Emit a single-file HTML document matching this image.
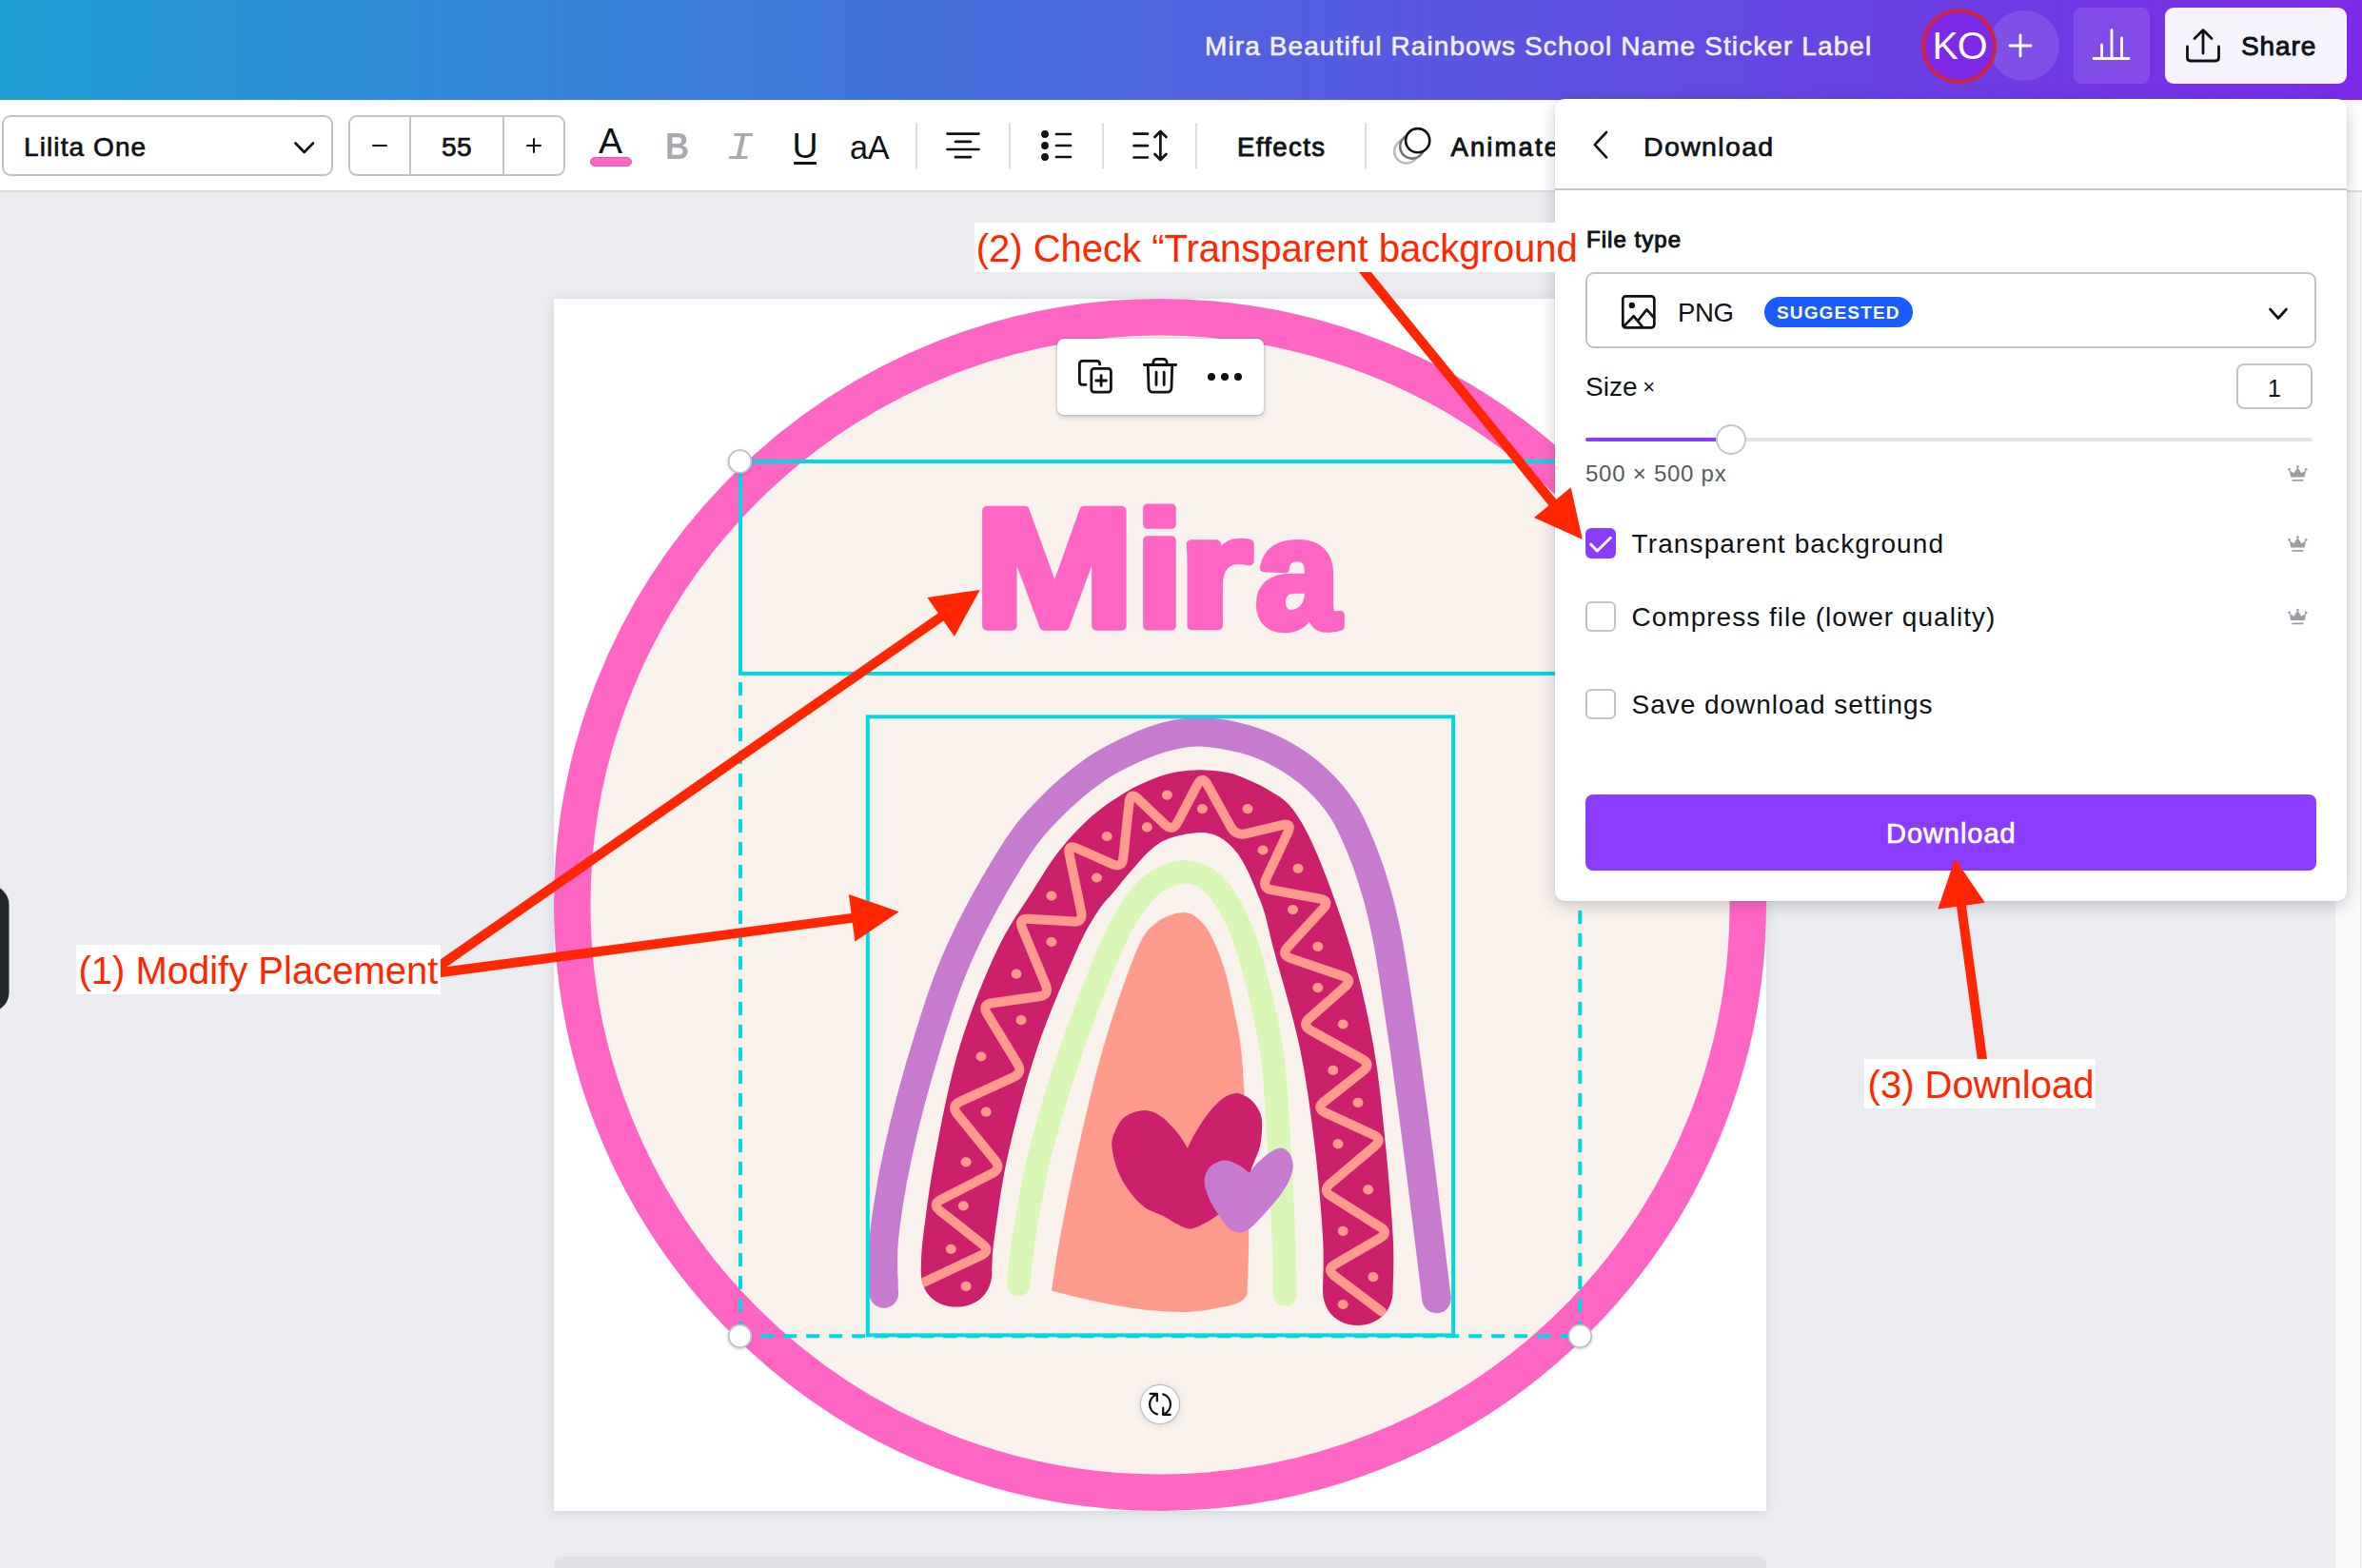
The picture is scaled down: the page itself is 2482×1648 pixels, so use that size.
<!DOCTYPE html>
<html lang="en">
<head>
<meta charset="utf-8">
<title>Mira Beautiful Rainbows School Name Sticker Label</title>
<style>
*{box-sizing:border-box;margin:0;padding:0}
html,body{width:2482px;height:1648px;overflow:hidden;background:#ebecf0;font-family:"Liberation Sans",sans-serif;color:#0d1216}
.abs{position:absolute}
#hdr{left:0;top:0;width:2482px;height:105px;background:linear-gradient(90deg,#1f9ed3 0%,#7d2ae8 100%)}
#tb{left:0;top:105px;width:2482px;height:95px;background:#fff}
#tbline{left:0;top:200px;width:2482px;height:2px;background:#dcdde1}
.box{border:2px solid #c0c4c9;border-radius:9px;background:#fff}
.t{position:absolute;white-space:nowrap;line-height:1}
#title{left:1266px;top:35px;font-size:27.5px;color:#fff;font-weight:400;letter-spacing:.45px}
.vdiv{position:absolute;width:2px;background:#dcdde1;top:129px;height:48px}
#scroll{left:2454px;top:202px;width:28px;height:1446px;background:#f9f9f9;border-right:1px solid #fdfdfd;box-shadow:inset -2px 0 0 -1px #ececec}
#canvas{left:582px;top:314px;width:1274px;height:1274px;background:#fff;box-shadow:0 2px 12px rgba(40,50,70,.12)}
#below{left:582px;top:1636px;width:1274px;height:20px;background:#e1e2e6;border-radius:7px 7px 0 0}
#lefttab{left:-31px;top:930.7px;width:40px;height:132.6px;background:#23272a;border-radius:20px;box-shadow:0 0 0 .6px #3c4043}
#panel{left:1634px;top:104px;width:832.3px;height:843.2px;background:#fff;border-radius:10px;box-shadow:0 0 0 1px rgba(60,70,90,.05),0 4px 18px rgba(40,50,70,.24)}
#pline{left:1634px;top:197.9px;width:832px;height:2px;background:#bfc4c9}
.lbl{background:#fff;color:#ff2600;font-size:40px;line-height:1;white-space:nowrap;position:absolute}
.cb{position:absolute;width:32px;height:32px;border:2px solid #c0c4c9;border-radius:6px;background:#fff}
</style>
</head>
<body>
<div class="abs" id="hdr"></div>
<div class="abs" id="tb"></div>
<div class="abs" id="tbline"></div>
<div class="abs" id="scroll"></div>
<div class="abs" id="lefttab"></div>
<div class="abs" id="canvas"></div>
<div class="abs" id="below"></div>
<svg class="abs" style="left:0;top:0" width="2482" height="1648" viewBox="0 0 2482 1648">
<defs><filter id="hs" x="-50%" y="-50%" width="200%" height="200%"><feDropShadow dx="0" dy="1" stdDeviation="1.6" flood-color="#39404f" flood-opacity=".28"/></filter><clipPath id="cv"><rect x="582" y="314" width="1274" height="1274"/></clipPath></defs>
<g clip-path="url(#cv)">
<circle cx="1219" cy="951" r="617.75" fill="#f9f1eb" stroke="#ff66c4" stroke-width="38.5"/>
<g><text transform="translate(1023.9,657.8) scale(1.185,1.040)" font-family="Liberation Sans, sans-serif" font-weight="700" font-size="170" fill="#ff66c4" stroke="#ff66c4" stroke-width="9" stroke-linejoin="round">M</text><text transform="translate(1193.3,658.0) scale(1.070,1.008)" font-family="Liberation Sans, sans-serif" font-weight="700" font-size="170" fill="#ff66c4" stroke="#ff66c4" stroke-width="9" stroke-linejoin="round">i</text><text transform="translate(1239.1,658.2) scale(1.156,0.956)" font-family="Liberation Sans, sans-serif" font-weight="700" font-size="170" fill="#ff66c4" stroke="#ff66c4" stroke-width="9" stroke-linejoin="round">r</text><text transform="translate(1319.5,658.6) scale(0.932,0.965)" font-family="Liberation Sans, sans-serif" font-weight="700" font-size="170" fill="#ff66c4" stroke="#ff66c4" stroke-width="9" stroke-linejoin="round">a</text></g>
<path d="M928.8,1359.5 C928.8,1357.9 928.5,1359.9 928.5,1350.0 C928.5,1340.1 926.4,1323.3 929.0,1300.0 C931.6,1276.7 936.6,1243.3 944.0,1210.0 C951.4,1176.7 962.4,1135.0 973.2,1100.0 C984.0,1065.0 993.8,1033.3 1008.8,1000.0 C1023.8,966.7 1047.4,925.0 1063.0,900.0 C1078.6,875.0 1087.8,865.3 1102.6,850.0 C1117.4,834.7 1135.8,819.2 1152.0,808.0 C1168.2,796.8 1186.2,789.0 1200.0,783.0 C1213.8,777.0 1224.2,774.2 1235.0,772.0 C1245.8,769.8 1253.0,768.8 1265.0,769.5 C1277.0,770.2 1293.2,772.6 1306.7,776.4 C1320.2,780.1 1333.2,785.1 1345.8,792.0 C1358.4,798.9 1371.6,807.9 1382.6,818.0 C1393.6,828.1 1403.8,840.0 1411.9,852.7 C1420.0,865.4 1425.8,880.3 1431.4,894.0 C1437.0,907.7 1441.3,920.9 1445.5,935.0 C1449.7,949.1 1453.2,964.0 1456.3,978.5 C1459.4,993.0 1460.7,1001.6 1463.9,1021.9 C1467.1,1042.2 1471.4,1070.3 1475.6,1100.0 C1479.8,1129.7 1484.7,1166.7 1489.0,1200.0 C1493.3,1233.3 1498.5,1275.0 1501.6,1300.0 C1504.7,1325.0 1506.4,1339.2 1507.7,1350.0 C1509.0,1360.8 1509.2,1362.5 1509.5,1365.0" fill="none" stroke="#c67bce" stroke-width="30.5" stroke-linecap="round"/>
<clipPath id="mclip"><path d="M967.8,1337.0 C968.2,1330.8 967.4,1321.2 970.0,1300.0 C972.6,1278.8 977.1,1243.3 983.5,1210.0 C989.9,1176.7 997.8,1135.0 1008.4,1100.0 C1019.0,1065.0 1034.1,1027.5 1047.0,1000.0 C1059.9,972.5 1074.8,952.8 1086.0,935.0 C1097.2,917.2 1103.8,905.8 1114.0,893.0 C1124.2,880.2 1135.7,868.0 1147.0,858.0 C1158.3,848.0 1171.1,839.8 1181.9,833.2 C1192.7,826.6 1202.8,822.1 1212.0,818.5 C1221.2,814.9 1228.6,812.8 1237.0,811.3 C1245.4,809.8 1253.8,809.1 1262.6,809.2 C1271.4,809.3 1282.1,810.4 1290.0,812.0 C1297.9,813.6 1302.9,816.0 1310.0,819.0 C1317.1,822.0 1324.4,824.8 1332.4,830.0 C1340.4,835.2 1349.2,838.3 1358.0,850.0 C1366.8,861.7 1374.6,875.0 1385.0,900.0 C1395.4,925.0 1410.6,966.7 1420.3,1000.0 C1430.0,1033.3 1437.5,1066.7 1443.4,1100.0 C1449.3,1133.3 1452.2,1166.7 1455.6,1200.0 C1459.0,1233.3 1462.3,1274.0 1463.7,1300.0 C1465.1,1326.0 1463.7,1346.7 1463.7,1356.0 C1463.7,1378 1448,1393 1426.8,1393 C1405,1393 1390,1378 1390,1356 C1390.0,1346.7 1391.5,1326.0 1390.0,1300.0 C1388.5,1274.0 1385.1,1233.3 1381.0,1200.0 C1376.9,1166.7 1372.6,1133.3 1365.6,1100.0 C1358.6,1066.7 1345.1,1023.3 1339.0,1000.0 C1332.9,976.7 1331.7,969.5 1329.0,960.0 C1326.3,950.5 1325.1,949.0 1322.9,943.3 C1320.7,937.6 1318.3,931.8 1315.8,926.0 C1313.3,920.2 1310.8,914.2 1307.7,908.8 C1304.7,903.4 1301.8,898.2 1297.5,893.5 C1293.2,888.8 1288.1,883.4 1282.2,880.3 C1276.3,877.2 1270.4,875.0 1261.9,875.0 C1253.4,875.0 1239.9,877.5 1231.4,880.3 C1222.9,883.0 1217.9,886.1 1211.1,891.5 C1204.3,896.9 1197.6,905.2 1190.8,912.8 C1184.0,920.4 1176.7,929.7 1170.5,937.2 C1164.3,944.7 1160.1,947.5 1153.5,958.0 C1146.9,968.5 1141.5,976.3 1131.0,1000.0 C1120.5,1023.7 1102.3,1065.0 1090.5,1100.0 C1078.7,1135.0 1067.6,1176.7 1060.0,1210.0 C1052.4,1243.3 1048.0,1278.8 1045.0,1300.0 C1042.0,1321.2 1042.8,1330.8 1042.3,1337.0 C1042.3,1359 1027,1373.6 1005,1373.6 C983,1373.6 967.8,1359 967.8,1337Z"/></clipPath>
<path d="M967.8,1337.0 C968.2,1330.8 967.4,1321.2 970.0,1300.0 C972.6,1278.8 977.1,1243.3 983.5,1210.0 C989.9,1176.7 997.8,1135.0 1008.4,1100.0 C1019.0,1065.0 1034.1,1027.5 1047.0,1000.0 C1059.9,972.5 1074.8,952.8 1086.0,935.0 C1097.2,917.2 1103.8,905.8 1114.0,893.0 C1124.2,880.2 1135.7,868.0 1147.0,858.0 C1158.3,848.0 1171.1,839.8 1181.9,833.2 C1192.7,826.6 1202.8,822.1 1212.0,818.5 C1221.2,814.9 1228.6,812.8 1237.0,811.3 C1245.4,809.8 1253.8,809.1 1262.6,809.2 C1271.4,809.3 1282.1,810.4 1290.0,812.0 C1297.9,813.6 1302.9,816.0 1310.0,819.0 C1317.1,822.0 1324.4,824.8 1332.4,830.0 C1340.4,835.2 1349.2,838.3 1358.0,850.0 C1366.8,861.7 1374.6,875.0 1385.0,900.0 C1395.4,925.0 1410.6,966.7 1420.3,1000.0 C1430.0,1033.3 1437.5,1066.7 1443.4,1100.0 C1449.3,1133.3 1452.2,1166.7 1455.6,1200.0 C1459.0,1233.3 1462.3,1274.0 1463.7,1300.0 C1465.1,1326.0 1463.7,1346.7 1463.7,1356.0 C1463.7,1378 1448,1393 1426.8,1393 C1405,1393 1390,1378 1390,1356 C1390.0,1346.7 1391.5,1326.0 1390.0,1300.0 C1388.5,1274.0 1385.1,1233.3 1381.0,1200.0 C1376.9,1166.7 1372.6,1133.3 1365.6,1100.0 C1358.6,1066.7 1345.1,1023.3 1339.0,1000.0 C1332.9,976.7 1331.7,969.5 1329.0,960.0 C1326.3,950.5 1325.1,949.0 1322.9,943.3 C1320.7,937.6 1318.3,931.8 1315.8,926.0 C1313.3,920.2 1310.8,914.2 1307.7,908.8 C1304.7,903.4 1301.8,898.2 1297.5,893.5 C1293.2,888.8 1288.1,883.4 1282.2,880.3 C1276.3,877.2 1270.4,875.0 1261.9,875.0 C1253.4,875.0 1239.9,877.5 1231.4,880.3 C1222.9,883.0 1217.9,886.1 1211.1,891.5 C1204.3,896.9 1197.6,905.2 1190.8,912.8 C1184.0,920.4 1176.7,929.7 1170.5,937.2 C1164.3,944.7 1160.1,947.5 1153.5,958.0 C1146.9,968.5 1141.5,976.3 1131.0,1000.0 C1120.5,1023.7 1102.3,1065.0 1090.5,1100.0 C1078.7,1135.0 1067.6,1176.7 1060.0,1210.0 C1052.4,1243.3 1048.0,1278.8 1045.0,1300.0 C1042.0,1321.2 1042.8,1330.8 1042.3,1337.0 C1042.3,1359 1027,1373.6 1005,1373.6 C983,1373.6 967.8,1359 967.8,1337Z" fill="#cc1f6c"/>
<g clip-path="url(#mclip)"><path d="M966.0,1350.0 L1031.2,1319.2 Q1041.1,1314.5 1032.4,1307.7 L987.7,1272.6 Q979.1,1265.8 988.9,1260.7 L1042.7,1233.1 Q1052.5,1228.0 1045.5,1219.5 L1005.9,1170.8 Q999.0,1162.3 1009.0,1157.7 L1065.0,1132.1 Q1075.0,1127.5 1069.3,1118.1 L1037.2,1065.3 Q1031.5,1055.9 1042.4,1054.3 L1092.2,1047.2 Q1103.1,1045.6 1098.9,1035.4 L1074.1,975.3 Q1069.9,965.1 1080.8,965.8 L1127.5,968.6 Q1138.4,969.3 1136.2,958.5 L1123.6,897.8 Q1121.4,887.1 1131.5,891.5 L1169.1,908.2 Q1179.1,912.6 1180.3,901.7 L1186.6,843.0 Q1187.8,832.1 1195.8,839.6 L1224.2,866.7 Q1232.2,874.2 1237.3,864.5 L1258.3,824.6 Q1263.4,814.9 1268.7,824.5 L1293.4,869.1 Q1298.8,878.7 1309.5,876.2 L1347.4,867.1 Q1358.1,864.5 1353.4,874.5 L1330.5,923.4 Q1325.8,933.4 1336.7,935.4 L1387.1,944.7 Q1397.9,946.7 1390.4,954.8 L1353.2,995.4 Q1345.7,1003.5 1356.1,1007.1 L1411.4,1026.0 Q1421.8,1029.6 1413.5,1036.9 L1375.8,1070.2 Q1367.6,1077.5 1377.2,1082.8 L1431.5,1113.1 Q1441.1,1118.4 1432.5,1125.3 L1391.2,1158.0 Q1382.6,1164.8 1392.5,1169.4 L1443.2,1192.7 Q1453.2,1197.3 1444.8,1204.4 L1397.7,1244.2 Q1389.3,1251.3 1398.6,1257.1 L1450.5,1289.7 Q1459.8,1295.6 1450.3,1301.1 L1402.9,1328.8 Q1393.4,1334.3 1402.2,1340.9 L1452.0,1378.5" fill="none" stroke="#ff9b8d" stroke-width="10" stroke-linejoin="round" stroke-linecap="round"/>
<ellipse cx="1015.1" cy="1351.9" rx="5.5" ry="5.1" fill="#ff9b8d"/>
<ellipse cx="999.3" cy="1312.8" rx="5.5" ry="5.1" fill="#ff9b8d"/>
<ellipse cx="1012.3" cy="1267.3" rx="5.5" ry="5.1" fill="#ff9b8d"/>
<ellipse cx="1015.1" cy="1221.3" rx="5.5" ry="5.1" fill="#ff9b8d"/>
<ellipse cx="1036.2" cy="1168.7" rx="5.5" ry="5.1" fill="#ff9b8d"/>
<ellipse cx="1031.0" cy="1110.5" rx="5.5" ry="5.1" fill="#ff9b8d"/>
<ellipse cx="1073.0" cy="1072.2" rx="5.5" ry="5.1" fill="#ff9b8d"/>
<ellipse cx="1068.0" cy="1023.6" rx="5.5" ry="5.1" fill="#ff9b8d"/>
<ellipse cx="1104.9" cy="990.0" rx="5.5" ry="5.1" fill="#ff9b8d"/>
<ellipse cx="1104.9" cy="941.6" rx="5.5" ry="5.1" fill="#ff9b8d"/>
<ellipse cx="1152.5" cy="922.5" rx="5.5" ry="5.1" fill="#ff9b8d"/>
<ellipse cx="1163.2" cy="879.0" rx="5.5" ry="5.1" fill="#ff9b8d"/>
<ellipse cx="1205.3" cy="869.4" rx="5.5" ry="5.1" fill="#ff9b8d"/>
<ellipse cx="1226.4" cy="835.6" rx="5.5" ry="5.1" fill="#ff9b8d"/>
<ellipse cx="1263.4" cy="850.1" rx="5.5" ry="5.1" fill="#ff9b8d"/>
<ellipse cx="1311.0" cy="850.1" rx="5.5" ry="5.1" fill="#ff9b8d"/>
<ellipse cx="1327.0" cy="893.5" rx="5.5" ry="5.1" fill="#ff9b8d"/>
<ellipse cx="1364.0" cy="912.8" rx="5.5" ry="5.1" fill="#ff9b8d"/>
<ellipse cx="1358.5" cy="956.1" rx="5.5" ry="5.1" fill="#ff9b8d"/>
<ellipse cx="1384.8" cy="994.8" rx="5.5" ry="5.1" fill="#ff9b8d"/>
<ellipse cx="1384.8" cy="1038.1" rx="5.5" ry="5.1" fill="#ff9b8d"/>
<ellipse cx="1411.2" cy="1076.5" rx="5.5" ry="5.1" fill="#ff9b8d"/>
<ellipse cx="1400.8" cy="1124.9" rx="5.5" ry="5.1" fill="#ff9b8d"/>
<ellipse cx="1427.0" cy="1158.9" rx="5.5" ry="5.1" fill="#ff9b8d"/>
<ellipse cx="1406.0" cy="1202.3" rx="5.5" ry="5.1" fill="#ff9b8d"/>
<ellipse cx="1437.7" cy="1250.4" rx="5.5" ry="5.1" fill="#ff9b8d"/>
<ellipse cx="1411.2" cy="1293.8" rx="5.5" ry="5.1" fill="#ff9b8d"/>
<ellipse cx="1442.9" cy="1342.1" rx="5.5" ry="5.1" fill="#ff9b8d"/>
<ellipse cx="1411.2" cy="1371.0" rx="5.5" ry="5.1" fill="#ff9b8d"/>
</g>
<path d="M1070.3,1350.0 C1071.2,1341.7 1072.1,1323.3 1076.0,1300.0 C1079.9,1276.7 1085.0,1243.3 1093.5,1210.0 C1102.0,1176.7 1115.0,1135.0 1127.0,1100.0 C1139.0,1065.0 1155.8,1023.3 1165.6,1000.0 C1175.4,976.7 1179.0,971.0 1185.7,960.0 C1192.4,949.0 1199.7,940.3 1206.0,934.0 C1212.3,927.7 1217.2,925.0 1223.8,922.0 C1230.4,919.0 1238.9,916.3 1245.7,916.2 C1252.5,916.1 1259.3,919.0 1264.5,921.5 C1269.7,924.0 1273.0,927.4 1276.6,931.0 C1280.2,934.6 1283.0,938.2 1286.3,943.0 C1289.6,947.8 1291.9,950.5 1296.2,960.0 C1300.5,969.5 1305.6,976.7 1312.2,1000.0 C1318.8,1023.3 1330.3,1066.7 1335.6,1100.0 C1340.9,1133.3 1341.6,1166.7 1343.8,1200.0 C1346.0,1233.3 1347.7,1273.2 1348.8,1300.0 C1349.9,1326.8 1350.0,1350.4 1350.3,1360.5" fill="none" stroke="#d8f7b6" stroke-width="24.5" stroke-linecap="round"/>
<path d="M1105.0,1356.5 C1106.5,1347.1 1109.4,1324.4 1114.0,1300.0 C1118.6,1275.6 1124.8,1243.3 1132.4,1210.0 C1140.0,1176.7 1149.3,1135.0 1159.6,1100.0 C1169.9,1065.0 1184.8,1021.7 1194.0,1000.0 C1203.2,978.3 1206.7,976.8 1215.0,970.0 C1223.3,963.2 1235.5,959.0 1243.6,959.0 C1251.7,959.0 1257.6,963.6 1263.4,969.8 C1269.2,975.9 1274.2,986.1 1278.5,995.9 C1282.8,1005.7 1286.1,1016.1 1289.4,1028.4 C1292.7,1040.8 1296.1,1058.1 1298.5,1070.0 C1300.9,1081.9 1302.3,1087.3 1303.8,1100.0 C1305.3,1112.7 1306.4,1129.3 1307.4,1146.0 C1308.4,1162.7 1309.2,1175.0 1310.0,1200.0 C1310.8,1225.0 1312.1,1269.3 1312.2,1296.0 C1312.3,1322.7 1310.9,1349.3 1310.6,1360.0 C1308,1368 1296,1372 1285,1373.6 C1270,1377 1255,1379 1240,1379 C1215,1378.5 1195,1376 1181.9,1373.6 C1160,1370 1125,1362 1105,1356.5Z" fill="#ff9b8d"/>
<path d="M1247.8,1206.6 C1249.3,1203.7 1253.2,1195.4 1256.9,1189.3 C1260.5,1183.1 1265.2,1175.5 1269.9,1169.7 C1274.6,1164.0 1280.0,1158.0 1285.0,1154.6 C1290.1,1151.1 1295.2,1148.8 1300.2,1149.1 C1305.3,1149.5 1311.4,1153.3 1315.4,1156.7 C1319.4,1160.2 1322.3,1165.4 1324.1,1169.7 C1325.9,1174.1 1326.2,1177.0 1326.2,1182.7 C1326.2,1188.5 1325.5,1197.9 1324.1,1204.4 C1322.6,1210.9 1320.1,1215.3 1317.6,1221.8 C1315.0,1228.3 1312.9,1236.2 1308.9,1243.5 C1304.9,1250.7 1298.6,1259.5 1293.7,1265.1 C1288.8,1270.7 1284.0,1273.8 1279.6,1277.1 C1275.3,1280.3 1272.2,1282.3 1267.7,1284.7 C1263.2,1287.0 1256.9,1290.4 1252.5,1291.2 C1248.2,1291.9 1247.1,1291.3 1241.7,1289.0 C1236.3,1286.6 1226.4,1280.3 1220.0,1277.1 C1213.6,1273.8 1208.8,1273.3 1203.6,1269.5 C1198.3,1265.7 1193.1,1260.4 1188.4,1254.3 C1183.7,1248.2 1178.6,1240.2 1175.4,1232.6 C1172.1,1225.0 1169.8,1215.3 1168.9,1208.8 C1168.0,1202.3 1167.8,1199.4 1169.9,1193.6 C1172.1,1187.8 1176.3,1178.5 1181.9,1174.1 C1187.5,1169.7 1197.1,1167.1 1203.6,1167.1 C1210.1,1167.1 1215.8,1170.8 1220.9,1174.1 C1226.0,1177.4 1232.6,1186.0 1233.9,1187.1 C1235.2,1188.2 1227.7,1179.5 1228.7,1180.6 C1229.6,1181.7 1236.3,1189.3 1239.5,1193.6 C1242.7,1197.9 1246.4,1204.4 1247.8,1206.6Z" fill="#cc1f6c"/>
<path d="M1312.6,1232.6 C1314.1,1230.8 1318.2,1225.4 1321.9,1221.8 C1325.6,1218.2 1330.8,1213.5 1334.9,1210.9 C1339.1,1208.4 1343.4,1206.2 1346.8,1206.6 C1350.3,1207.0 1353.5,1209.9 1355.5,1213.1 C1357.5,1216.4 1358.9,1221.4 1358.8,1226.1 C1358.6,1230.8 1357.0,1235.9 1354.4,1241.3 C1351.9,1246.7 1347.9,1252.9 1343.6,1258.6 C1339.3,1264.4 1333.5,1270.6 1328.4,1276.0 C1323.4,1281.4 1317.6,1287.9 1313.2,1291.2 C1308.9,1294.4 1306.0,1295.5 1302.4,1295.5 C1298.8,1295.5 1294.8,1293.7 1291.6,1291.2 C1288.3,1288.6 1286.3,1285.4 1282.9,1280.3 C1279.4,1275.3 1273.8,1267.3 1271.0,1260.8 C1268.1,1254.3 1265.4,1247.1 1265.5,1241.3 C1265.7,1235.5 1268.4,1229.7 1272.0,1226.1 C1275.7,1222.5 1282.2,1219.8 1287.2,1219.6 C1292.3,1219.4 1298.2,1222.9 1302.4,1225.0 C1306.6,1227.2 1310.9,1231.4 1312.6,1232.6Z" fill="#c67bce"/>
</g>
<rect x="778" y="485" width="882.3" height="222.9" fill="none" stroke="#00d9e1" stroke-width="4"/>
<rect x="911.8" y="753.3" width="615.3" height="650" fill="none" stroke="#00d9e1" stroke-width="4"/>
<path d="M778,717.1V1404M1660.3,717.1V1404M775.2,1404.3H1662" fill="none" stroke="#00d9e1" stroke-width="4" stroke-dasharray="14 10"/>
<circle cx="777.5" cy="485.0" r="11.9" fill="#fff" stroke="#bcc0cb" stroke-width="1.8" filter="url(#hs)"/>
<circle cx="777.5" cy="1404.3" r="11.9" fill="#fff" stroke="#bcc0cb" stroke-width="1.8" filter="url(#hs)"/>
<circle cx="1660.3" cy="1404.3" r="11.9" fill="#fff" stroke="#bcc0cb" stroke-width="1.8" filter="url(#hs)"/>
<circle cx="1660.3" cy="485.0" r="11.9" fill="#fff" stroke="#bcc0cb" stroke-width="1.8" filter="url(#hs)"/>
</svg>
<div class="abs" style="left:1110.5px;top:355.5px;width:217px;height:80.5px;border-radius:7px;background:#fff;box-shadow:0 0 0 1.5px rgba(64,87,109,.13),0 3px 5px rgba(57,76,96,.2)"></div>
<svg class="abs" style="left:1110px;top:355px" width="218" height="82" viewBox="1110 355 218 82" fill="none" stroke="#0d1216" stroke-width="2.8" stroke-linecap="round" stroke-linejoin="round"><path d="M1141,404.3H1137.5Q1134.4,404.3 1134.4,401.2V382.5Q1134.4,379.4 1137.5,379.4H1152.5Q1155.6,379.4 1155.6,382.5V383"/><rect x="1146.8" y="387.4" width="20.6" height="24.7" rx="3"/><path d="M1157.1,394.6V405.4M1151.7,400H1162.5"/><path d="M1202.3,383.5H1235.7M1211.8,383V381.5Q1211.8,377.3 1216,377.3H1222Q1226.2,377.3 1226.2,381.5V383M1206.3,384.5L1207,407.5Q1207.2,412.2 1212,412.2H1226Q1230.8,412.2 1231,407.5L1231.7,384.5M1215,391.2V404.6M1223.2,391.2V404.6"/><g fill="#0d1216" stroke="none"><circle cx="1273" cy="396.1" r="4"/><circle cx="1287" cy="396.1" r="4"/><circle cx="1301" cy="396.1" r="4"/></g></svg>
<div class="abs" style="left:1198.7px;top:1455.5px;width:40.6px;height:40.6px;border-radius:50%;background:#fff;box-shadow:0 0 0 1.2px rgba(170,176,186,.75),0 1px 9px rgba(60,60,70,.18)"></div>
<svg class="abs" style="left:1197px;top:1454px" width="44" height="44" viewBox="1197 1454 44 44" fill="none" stroke="#0d1216" stroke-width="2.25" stroke-linecap="round" stroke-linejoin="round"><path d="M1215.9,1486.4A11,11 0 0 1 1215.2,1465.6M1208.6,1464.9H1215.9V1472.4M1222.2,1465.4A11,11 0 0 1 1222.9,1486.2M1222.2,1479.7V1486.9H1229.6"/></svg>
<div class="abs box" style="left:2px;top:121px;width:348px;height:64px"></div>
<div class="t" id="t_font" style="left:25px;top:140.6px;font-size:28px;font-weight:400;-webkit-text-stroke:.7px #0d1216;letter-spacing:1.1px">Lilita One</div>
<svg class="abs" style="left:306px;top:144px" width="28" height="22" viewBox="0 0 28 22"><path d="M4.5,6.5 L13.7,16 L23,6.5" fill="none" stroke="#0d1216" stroke-width="2.6" stroke-linecap="round" stroke-linejoin="round"/></svg>
<div class="abs box" style="left:366px;top:121px;width:228px;height:64px"></div>
<div class="abs" style="left:430px;top:123px;width:2px;height:60px;background:#c0c4c9"></div>
<div class="abs" style="left:528px;top:123px;width:2px;height:60px;background:#c0c4c9"></div>
<div class="abs" style="left:391px;top:151.5px;width:16px;height:2.6px;background:#0d1216;border-radius:1px"></div>
<div class="t" id="t_55" style="left:464px;top:140.6px;font-size:28px;-webkit-text-stroke:.7px #0d1216;letter-spacing:.4px">55</div>
<div class="abs" style="left:553px;top:151.5px;width:16px;height:2.6px;background:#0d1216;border-radius:1px"></div>
<div class="abs" style="left:559.7px;top:145px;width:2.6px;height:16px;background:#0d1216;border-radius:1px"></div>
<div class="t" id="t_A" style="left:629px;top:129.5px;font-size:37.5px">A</div>
<div class="abs" style="left:620px;top:165px;width:44px;height:10px;border-radius:5px;background:#ff66c4;border:1px solid #e356ad"></div>
<div class="t" id="t_B" style="left:697.5px;top:134.6px;font-size:38px;font-weight:700;color:#a6a9ae;transform:scaleX(.92)">B</div>
<div class="t" id="t_I" style="left:765.5px;top:137px;font-size:40px;font-style:italic;font-family:'Liberation Mono',monospace;color:#a6a9ae;transform:scaleX(1.2)">I</div>
<div class="t" id="t_U" style="left:832.5px;top:134.6px;font-size:37.5px">U</div>
<div class="abs" style="left:834px;top:170px;width:23.5px;height:2.8px;background:#0d1216;border-radius:1px"></div>
<div class="t" id="t_aA" style="left:893px;top:138.3px;font-size:34.3px;letter-spacing:-.3px">aA</div>
<div class="vdiv" style="left:962px"></div>
<svg class="abs" style="left:990px;top:134px" width="44" height="38" viewBox="990 134 44 38" fill="none" stroke="#0d1216" stroke-width="2.7" stroke-linecap="round"><path d="M995.5,140.6H1028.5M1004,148.8H1020M995.5,157H1028.5M1004,165.2H1020"/></svg>
<div class="vdiv" style="left:1060px"></div>
<svg class="abs" style="left:1090px;top:134px" width="44" height="38" viewBox="1090 134 44 38" fill="none" stroke="#0d1216" stroke-width="2.7" stroke-linecap="round"><circle cx="1098" cy="141" r="3.9" fill="#0d1216" stroke="none"/><circle cx="1098" cy="153" r="3.9" fill="#0d1216" stroke="none"/><circle cx="1098" cy="165" r="3.9" fill="#0d1216" stroke="none"/><path d="M1110,141H1125M1110,153H1125M1110,165H1125"/></svg>
<div class="vdiv" style="left:1158px"></div>
<svg class="abs" style="left:1184px;top:132px" width="48" height="42" viewBox="1184 132 48 42" fill="none" stroke="#0d1216" stroke-width="2.7" stroke-linecap="round" stroke-linejoin="round"><path d="M1191.5,140.6H1206M1191.5,153.1H1206M1191.5,165.5H1206M1219.4,138.5V167.5M1213.4,144L1219.4,138L1225.4,144M1213.4,162L1219.4,168L1225.4,162"/></svg>
<div class="vdiv" style="left:1256px"></div>
<div class="t" id="t_eff" style="left:1300px;top:140.5px;font-size:27.5px;font-weight:400;-webkit-text-stroke:.9px #0d1216;letter-spacing:1.4px">Effects</div>
<div class="vdiv" style="left:1434px"></div>
<svg class="abs" style="left:1460px;top:130px" width="50" height="48" viewBox="1460 130 50 48" fill="#fff" stroke-width="2.6"><circle cx="1477.8" cy="159" r="12.6" stroke="#b9bcc0"/><circle cx="1483.8" cy="154" r="12.6" stroke="#70757a"/><circle cx="1489.7" cy="147.7" r="12.6" stroke="#0d1216"/></svg>
<div class="t" id="t_ani" style="left:1524.5px;top:140.5px;font-size:27.5px;font-weight:400;-webkit-text-stroke:.9px #0d1216;letter-spacing:2.1px">Animate</div>

<div class="t" id="t_title" style="left:1266px;top:35px;font-size:28px;color:#f3f0fd;-webkit-text-stroke:.6px #f3f0fd;letter-spacing:1.1px">Mira Beautiful Rainbows School Name Sticker Label</div>
<div class="abs" style="left:2089.7px;top:10.8px;width:74px;height:74px;border-radius:50%;background:rgba(255,255,255,.11)"></div>
<div class="abs" style="left:2019px;top:8.5px;width:79px;height:79px;border-radius:50%;background:#7d2ae8;border:4.5px solid #cf2340"></div>
<div class="t" id="t_ko" style="left:2030.5px;top:27.5px;font-size:41px;color:#fff;letter-spacing:-1.2px">KO</div>
<svg class="abs" style="left:2105px;top:30px" width="36" height="36" viewBox="0 0 36 36"><path d="M18,7V29M7,18H29" stroke="#fff" stroke-width="2.8" stroke-linecap="round"/></svg>
<div class="abs" style="left:2179px;top:8px;width:80px;height:80px;border-radius:8px;background:rgba(255,255,255,.11)"></div>
<svg class="abs" style="left:2195px;top:26px" width="48" height="42" viewBox="2195 26 48 42" fill="none" stroke="#fff" stroke-width="2.8" stroke-linecap="round"><path d="M2200,61.5H2237M2208.5,61V47M2219,61V31.5M2229.5,61V40"/></svg>
<div class="abs" style="left:2275px;top:8px;width:191px;height:80px;border-radius:9px;background:#f6f3fd"></div>
<svg class="abs" style="left:2292px;top:26px" width="46" height="44" viewBox="2292 26 46 44" fill="none" stroke="#0d1216" stroke-width="2.8" stroke-linecap="round" stroke-linejoin="round"><path d="M2315,56V32M2306,40.5L2315,31.5L2324,40.5M2298.5,49V60.5Q2298.5,64 2302,64H2328Q2331.5,64 2331.5,60.5V49"/></svg>
<div class="t" id="t_share" style="left:2355px;top:35px;font-size:28px;color:#0d1216;-webkit-text-stroke:.9px #0d1216;letter-spacing:.9px">Share</div>

<div class="abs" id="panel"></div>
<div class="abs" id="pline"></div>
<svg class="abs" style="left:1666px;top:132px" width="32" height="40" viewBox="1666 132 32 40"><path d="M1688,139L1675.8,152.2L1688,165.4" fill="none" stroke="#0d1216" stroke-width="2.7" stroke-linecap="round" stroke-linejoin="round"/></svg>
<div class="t" id="t_dl" style="left:1727px;top:140px;font-size:28.5px;-webkit-text-stroke:.7px #0d1216;letter-spacing:1.35px">Download</div>
<div class="t" id="t_ft" style="left:1667px;top:239.5px;font-size:24px;font-weight:400;-webkit-text-stroke:1px #0d1216;letter-spacing:1.05px">File type</div>
<div class="abs box" style="left:1666px;top:286px;width:768px;height:79.5px"></div>
<svg class="abs" style="left:1700px;top:306px" width="44" height="44" viewBox="1700 306 44 44" fill="none" stroke="#0d1216" stroke-width="2.7" stroke-linejoin="round" stroke-linecap="round"><rect x="1705.3" y="311.3" width="33" height="33" rx="3"/><circle cx="1714.8" cy="320.9" r="3.2" fill="#0d1216" stroke="none"/><path d="M1706.6,342.6L1716.8,332.3L1725.4,342.8M1721.2,337L1730.4,325.4L1738.2,334"/></svg>
<div class="t" id="t_png" style="left:1763px;top:315px;font-size:27.5px;letter-spacing:-.4px">PNG</div>
<div class="abs" style="left:1854px;top:312px;width:156px;height:32px;border-radius:16px;background:#1a5cff"></div>
<div class="t" id="t_sug" style="left:1867px;top:318.5px;font-size:19px;font-weight:700;color:#fff;letter-spacing:1.15px">SUGGESTED</div>
<svg class="abs" style="left:2380px;top:318px" width="28" height="24" viewBox="2380 318 28 24"><path d="M2385.5,325L2394,334.5L2402.5,325" fill="none" stroke="#0d1216" stroke-width="2.7" stroke-linecap="round" stroke-linejoin="round"/></svg>
<div class="t" id="t_size" style="left:1666px;top:392.5px;font-size:28px;letter-spacing:0">Size <span style="font-size:22px;position:relative;top:-2px;left:-2px">×</span></div>
<div class="abs box" style="left:2349.8px;top:382.2px;width:80.2px;height:47.6px;border-radius:8px"></div>
<div class="t" id="t_one" style="left:2383px;top:395.5px;font-size:25px">1</div>
<div class="abs" style="left:1666px;top:459.5px;width:764px;height:4px;border-radius:2px;background:#e3e4e8"></div>
<div class="abs" style="left:1666px;top:459.5px;width:140px;height:4px;border-radius:2px;background:#8b3dff"></div>
<div class="abs" style="left:1803.2px;top:446.2px;width:31.6px;height:31.6px;border-radius:50%;background:#fff;border:2px solid #c3c6cb"></div>
<div class="t" id="t_dim" style="left:1666px;top:485.5px;font-size:24px;color:#555b61;letter-spacing:.75px">500 × 500 px</div>
<div class="abs" style="left:1666px;top:555px;width:32px;height:32px;border-radius:6px;background:#8b3dff"></div>
<svg class="abs" style="left:1666px;top:555px" width="32" height="32" viewBox="1666 555 32 32"><path d="M1671.8,572.2L1678.4,579L1692.3,565.3" fill="none" stroke="#fff" stroke-width="3" stroke-linecap="round" stroke-linejoin="round"/></svg>
<div class="t" id="t_tb" style="left:1714.5px;top:557.5px;font-size:28px;letter-spacing:1.12px">Transparent background</div>
<div class="cb" style="left:1666px;top:632px"></div>
<div class="t" id="t_cf" style="left:1714.5px;top:634.5px;font-size:28px;letter-spacing:1.02px">Compress file (lower quality)</div>
<div class="cb" style="left:1666px;top:724px"></div>
<div class="t" id="t_sd" style="left:1714.5px;top:726.5px;font-size:28px;letter-spacing:.97px">Save download settings</div>
<div class="abs" style="left:1666px;top:835px;width:768px;height:79.5px;border-radius:8px;background:#8b3dff"></div>
<div class="t" id="t_dlb" style="left:1982px;top:861.5px;font-size:29px;color:#fff;-webkit-text-stroke:.7px #fff;letter-spacing:.95px">Download</div>
<svg class="abs" style="left:2400px;top:480px" width="30" height="180" viewBox="2400 480 30 180" fill="#9b9ea4"><g id="crown"><path d="M2407.2,501.6L2405.6,494.2L2410.4,497.3L2414.4,491L2418.4,497.3L2423.2,494.2L2421.6,501.6Z"/><rect x="2408.2" y="504" width="12.4" height="1.7" rx=".8"/><circle cx="2405.6" cy="493.4" r="1.4"/><circle cx="2414.4" cy="490.6" r="1.4"/><circle cx="2423.2" cy="493.4" r="1.4"/></g><use href="#crown" y="74"/><use href="#crown" y="150.5"/></svg>

<svg class="abs" style="left:0;top:0" width="2482" height="1648" viewBox="0 0 2482 1648">
<polygon points="452.4,1027.9 991.5,652.6 1002.9,669.0 1029.7,619.9 974.4,627.9 985.8,644.4 446.6,1019.7" fill="#ff2600"/>
<polygon points="450.2,1028.8 895.8,969.8 898.4,989.6 944.7,958.3 891.9,940.1 894.5,959.9 448.8,1018.8" fill="#ff2600"/>
<polygon points="1420.9,277.4 1627.5,531.3 1612.0,543.9 1662.9,566.9 1650.7,512.3 1635.2,525.0 1428.7,271.0" fill="#ff2600"/>
<polygon points="2089.8,1126.3 2066.0,951.5 2085.8,948.8 2054.3,902.6 2036.3,955.5 2056.1,952.8 2079.8,1127.7" fill="#ff2600"/>
</svg>
<div class="lbl" id="t_l1" style="left:80.0px;top:993.0px;width:383.0px;height:51.7px;line-height:55px;padding-left:2.4px;overflow:hidden">(1) Modify Placement</div>
<div class="lbl" id="t_l2" style="left:1023.7px;top:234.0px;width:634.3px;height:51.7px;line-height:55px;padding-left:2.0px;overflow:hidden">(2) Check “Transparent background</div>
<div class="lbl" id="t_l3" style="left:1958.7px;top:1113.0px;width:243.3px;height:51.7px;line-height:55px;padding-left:3.9px;overflow:hidden">(3) Download</div>
</body>
</html>
